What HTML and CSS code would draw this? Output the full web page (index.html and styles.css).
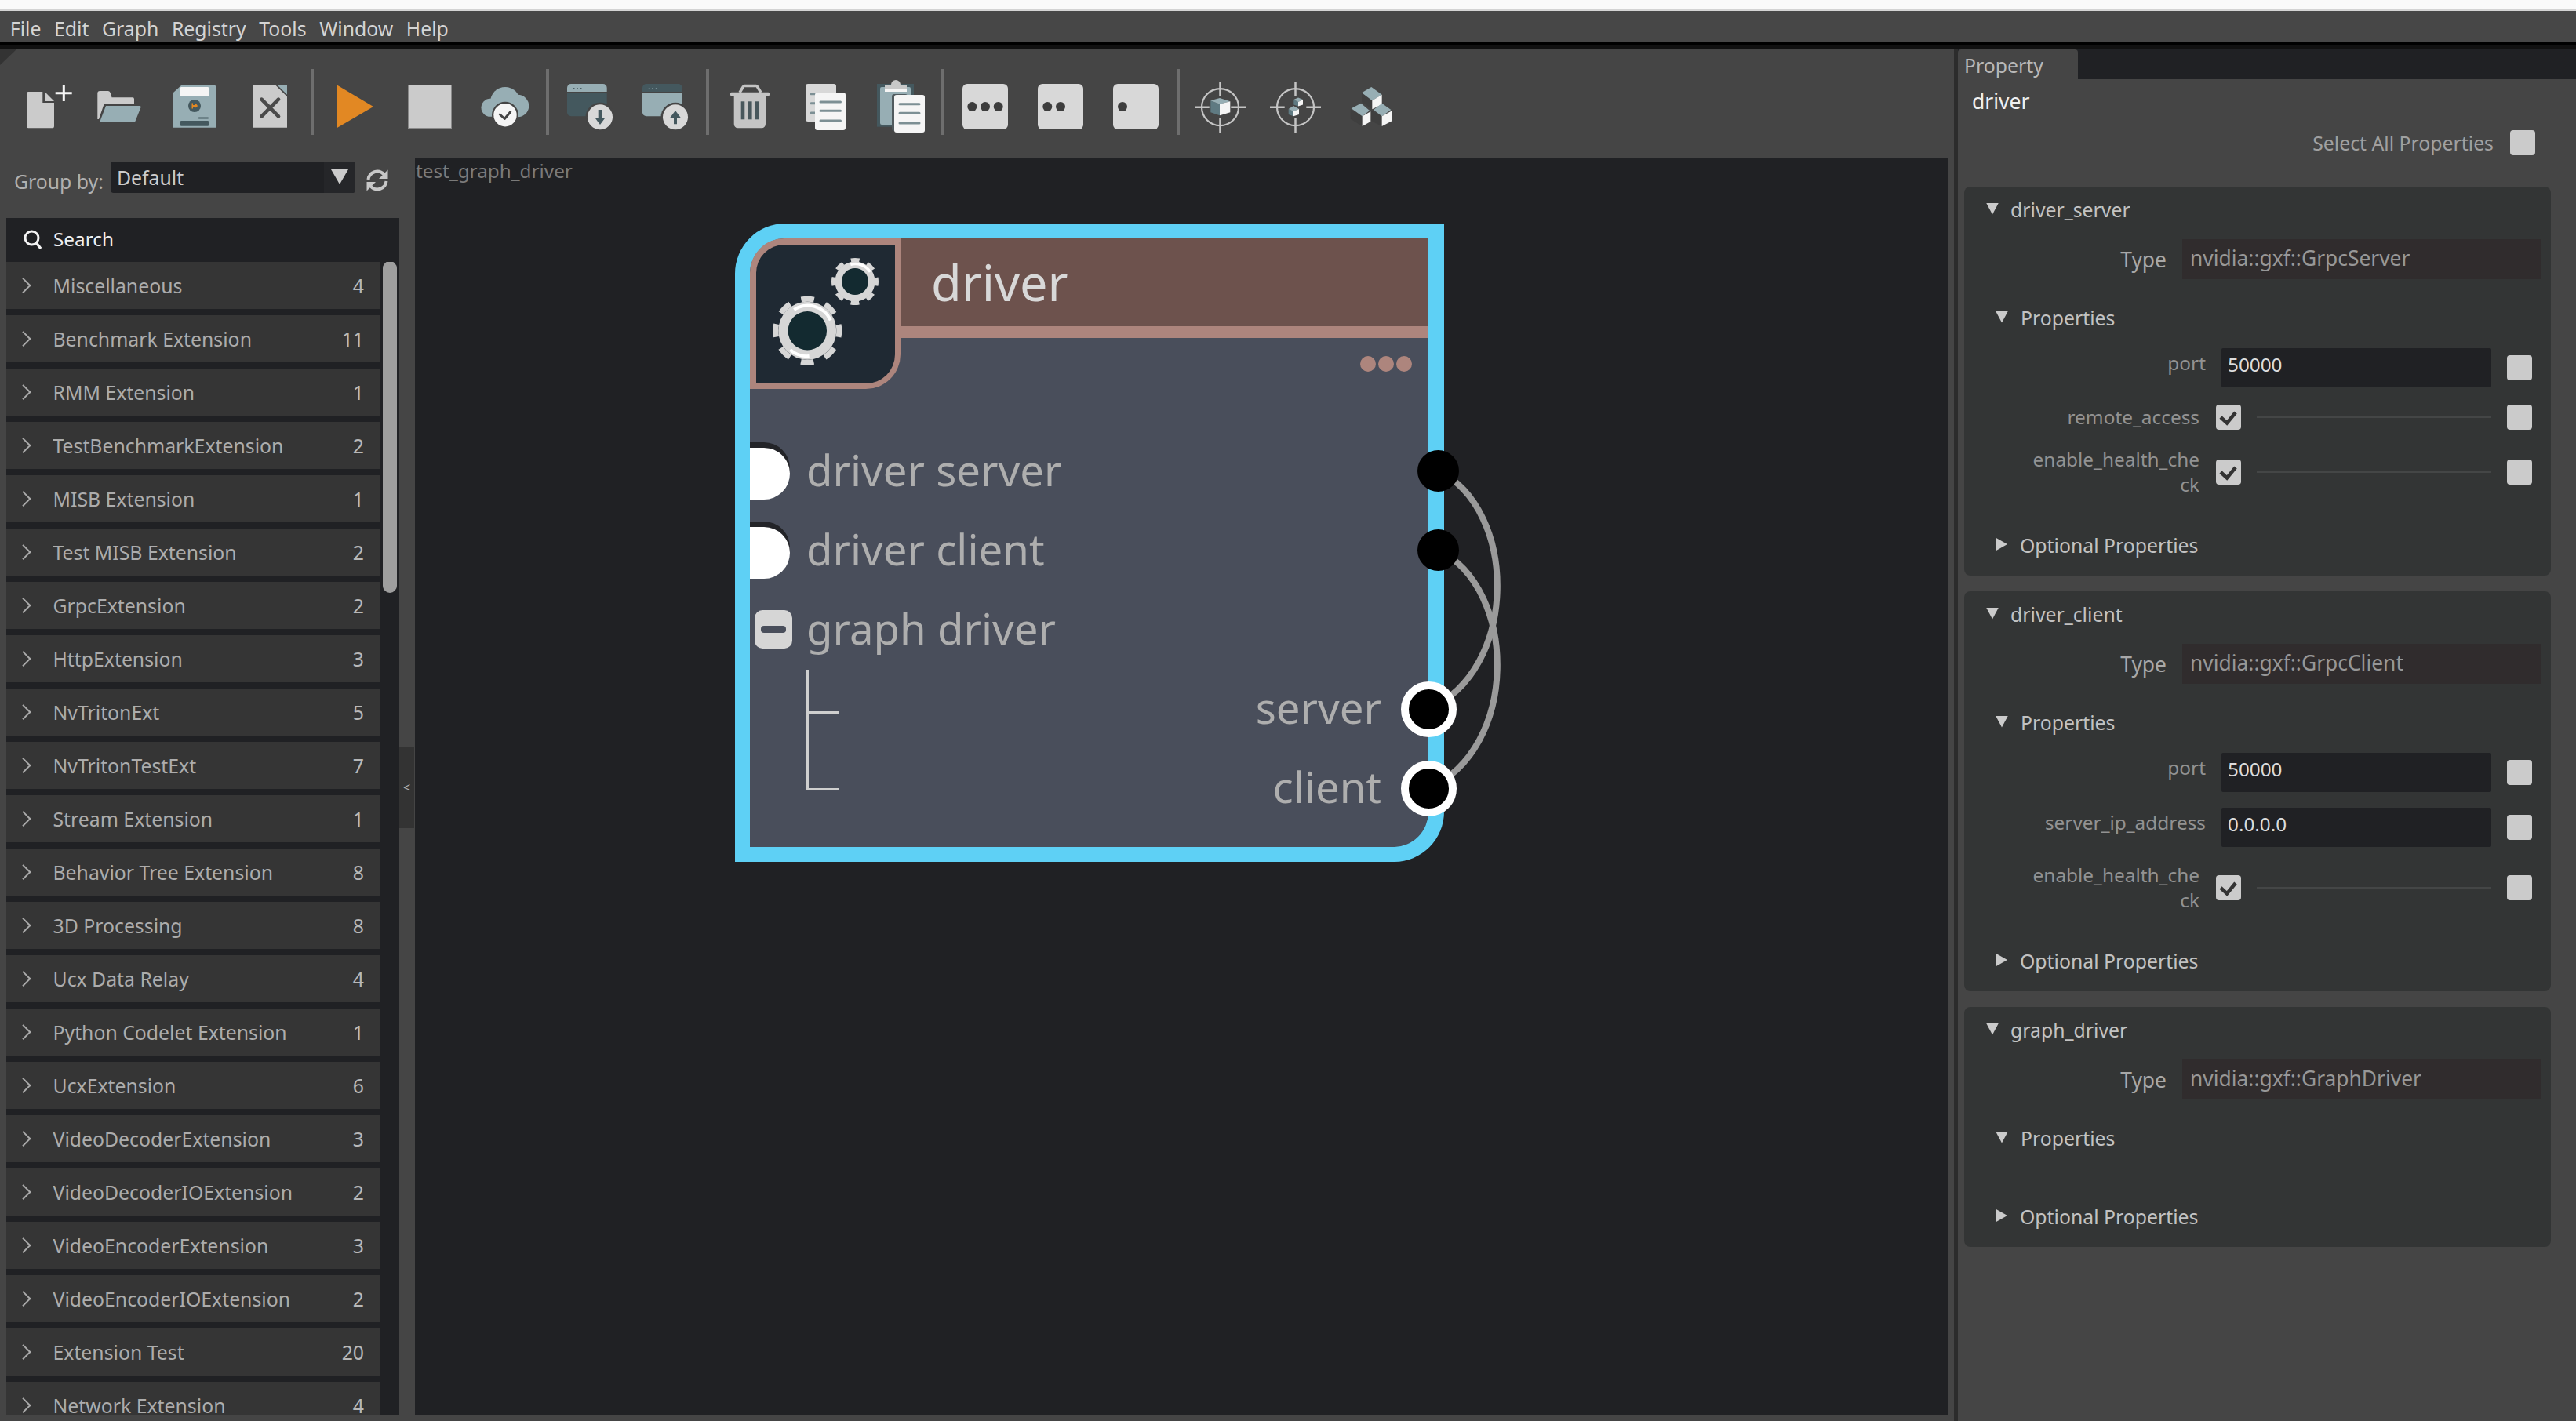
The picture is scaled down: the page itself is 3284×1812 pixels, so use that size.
FILE: index.html
```html
<!DOCTYPE html>
<html lang="en">
<head>
<meta charset="utf-8">
<title>Composer</title>
<link rel="stylesheet" href="styles.css">
</head>
<body>
<div class="titlebar"></div>
<nav class="menubar">
  <span class="menu-item">File</span><span class="menu-item">Edit</span><span class="menu-item">Graph</span><span class="menu-item">Registry</span><span class="menu-item">Tools</span><span class="menu-item">Window</span><span class="menu-item">Help</span>
</nav>
<div class="rule-black"></div>
<div class="rule-dark"></div>
<div class="main">
  <div class="workspace">
    <div class="corner"></div>
    <div class="toolbar">
      <svg class="tool" viewBox="8 88 96 84"><path class="c-light" d="M34 119a2 2 0 0 1 2-2h18.3v14H69v30.3a2 2 0 0 1-2 2H36a2 2 0 0 1-2-2z"/><path class="c-light" d="M57.3 117.3 69 129H57.3z"/><path class="c-white" d="M70.7 117.2h9.1v-8.9h3v8.9h8.9v3h-8.9v8.8h-3v-8.8h-9.1z"/></svg>
      <svg class="tool" viewBox="104 88 96 84"><path class="c-light" d="M124.3 119q0-3 3-3H138q2 0 3 3l1.5 5.3H169q2 0 2 2V133h-38.500l-6.500 19h-1.700z"/><path class="c-blue" d="M135 135h42.500q2.500 0 2 2l-7 17.500q-.5 1.500-2 1.500h-42q-1.500 0-1-1.500z"/></svg>
      <svg class="tool" viewBox="200 88 96 84"><path class="c-blue" d="M231 109h43q1 0 1 1v52.700h-54V118z"/><rect class="c-white" x="230" y="111" width="36" height="11.700" rx="1"/><circle class="c-teal" cx="248" cy="135" r="8"/><path class="c-orange" d="M244.500 131.500h1.500v7h-1.500zM246 134h2a2 2 0 1 1 0 2h-2z"/><rect class="c-teal" x="252.700" y="149.500" width="13.300" height="2" rx="1"/><rect class="c-teal" x="230" y="154" width="36" height="6.700" rx="1"/></svg>
      <svg class="tool" viewBox="296 88 96 84"><path class="c-light" d="M322 109h29.700L366 123.300v39.400h-44z"/><path class="c-blue" d="M354 109h12v11.700z"/><path class="x-stroke" d="M333.500 126.700 355 148.300M355 126.700 333.500 148.300"/></svg>
      <span class="sep"></span>
      <svg class="tool" viewBox="404 88 96 84"><path class="c-orange" d="M429.300 108.300 476 136l-46.700 27.300z"/></svg>
      <svg class="tool" viewBox="500 88 96 84"><rect class="stop" x="520.500" y="108.500" width="55" height="55"/></svg>
      <svg class="tool" viewBox="596 88 96 84"><circle class="c-blue" cx="644" cy="130" r="19"/><circle class="c-blue" cx="625" cy="137.300" r="11.500"/><circle class="c-blue" cx="660" cy="135" r="14.300"/><circle class="c-bg" cx="644" cy="146.700" r="17"/><circle class="c-white" cx="644" cy="146.700" r="14.700"/><path class="check-thin" d="M637.300 146l6 5.500 7.400-8.800"/></svg>
      <span class="sep"></span>
      <svg class="tool" viewBox="704 88 96 84"><path class="c-blue" d="M723 117v-5a5 5 0 0 1 5-5h40.700a5 5 0 0 1 5 5v5z"/><path class="c-teal" d="M723 119h50.700v24.300a5 5 0 0 1-5 5H728a5 5 0 0 1-5-5z"/><circle class="c-teal" cx="731.700" cy="113" r="1"/><circle class="c-teal" cx="736" cy="113" r="1"/><circle class="c-teal" cx="740.700" cy="113" r="1"/><circle class="c-bg" cx="765" cy="149.300" r="18.500"/><circle class="c-pale" cx="765" cy="149.300" r="16"/><path class="c-teal" d="M762.700 140h4.600v10h4.400l-6.700 9-6.700-9h4.400z"/></svg>
      <svg class="tool" viewBox="800 88 96 84"><path class="c-teal" d="M819 117v-5a5 5 0 0 1 5-5h40.700a5 5 0 0 1 5 5v5z"/><path class="c-blue" d="M819 119h50.700v24.300a5 5 0 0 1-5 5H824a5 5 0 0 1-5-5z"/><circle class="c-dots" cx="827.700" cy="113" r="1"/><circle class="c-dots" cx="832" cy="113" r="1"/><circle class="c-dots" cx="836.700" cy="113" r="1"/><circle class="c-bg" cx="861" cy="149.300" r="18.500"/><circle class="c-pale" cx="861" cy="149.300" r="16"/><path class="c-teal" d="m861 141 6.700 9h-4.700v8.300h-4V150h-4.700z"/></svg>
      <span class="sep"></span>
      <svg class="tool" viewBox="908 88 96 84"><path class="trash-handle" d="M943 118l4.500-7.500a2 2 0 0 1 2-1h14a2 2 0 0 1 2 1L970 118"/><rect class="c-trash" x="931" y="117.700" width="50" height="4.500" rx="1.500"/><path class="c-trash" d="M935.700 122.700H976V158a5 5 0 0 1-5 5.300h-30.300a5 5 0 0 1-5-5.300z"/><rect class="c-barteal" x="944.700" y="129.300" width="4.600" height="23"/><rect class="c-barteal" x="954" y="129.300" width="4.600" height="23"/><rect class="c-barteal" x="962.700" y="129.300" width="4.600" height="23"/></svg>
      <svg class="tool" viewBox="1004 88 96 84"><rect class="c-pale" x="1027" y="107" width="39" height="48" rx="3"/><path class="doc-line" d="M1034 119.700h6M1034 131.700h6M1034 144h6"/><rect class="c-white" x="1039" y="118" width="39" height="48" rx="3"/><path class="doc-line" d="M1046 130h25.500M1046 141.300h25.500M1046 154h25.500"/></svg>
      <svg class="tool" viewBox="1100 88 96 84"><rect class="c-teal" x="1118" y="107" width="47" height="54.700"/><rect class="c-blue" x="1122" y="111" width="39" height="48" rx="2"/><circle class="c-clip" cx="1142" cy="108" r="6"/><rect class="c-clip" x="1128" y="108" width="28" height="6"/><rect class="c-white" x="1128" y="114" width="28" height="3"/><rect class="c-shadow" x="1137" y="120" width="20" height="47" rx="3"/><rect class="c-white" x="1140" y="121" width="39" height="48" rx="3"/><path class="doc-line" d="M1147 132.700h25M1147 144.300h25M1147 157h25"/></svg>
      <span class="sep"></span>
      <svg class="tool" viewBox="1208 88 96 84"><rect class="c-pale" x="1227" y="107" width="58" height="58" rx="6"/><circle class="c-dark" cx="1239.300" cy="136" r="6"/><circle class="c-dark" cx="1256" cy="136" r="6"/><circle class="c-dark" cx="1272.700" cy="136" r="6"/></svg>
      <svg class="tool" viewBox="1304 88 96 84"><rect class="c-pale" x="1323" y="107" width="58" height="58" rx="6"/><circle class="c-dark" cx="1335.300" cy="136" r="6"/><circle class="c-dark" cx="1352" cy="136" r="6"/></svg>
      <svg class="tool" viewBox="1400 88 96 84"><rect class="c-pale" x="1419" y="107" width="58" height="58" rx="6"/><circle class="c-dark" cx="1431" cy="136" r="6"/></svg>
      <span class="sep"></span>
      <svg class="tool" viewBox="1508 88 96 84"><circle class="ring" cx="1555.500" cy="136.700" r="23.500"/><path class="cross" d="M1523 136.700h18.700M1569.300 136.700H1588M1555.500 104v18.700M1555.500 150.700V169"/><path class="c-cubel" d="M1543.300 128.300 1555 132.700v14.600l-11.700-4z"/><path class="c-blue" d="M1543.300 128.300 1555 125l13.300 4.300-13.300 3.400z"/><path class="c-white" d="m1555 132.700 13.300-3.400v14l-13.300 4z"/></svg>
      <svg class="tool" viewBox="1604 88 96 84"><circle class="ring" cx="1651.500" cy="136.700" r="23.500"/><path class="cross" d="M1619 136.700h18.700M1665.300 136.700H1684M1651.500 104v18.700M1651.500 150.700V169"/><path class="c-cubel" d="M1649.300 127l5.700 3v5.500l-5.700-2z"/><path class="c-blue" d="M1649.300 127l5.700-2.500 6 2.500-6 3z"/><path class="c-white" d="m1655 130 6-3v6.500l-6 2z"/><path class="c-cubel" d="M1642.700 139l6.300 3v6.300l-6.300-2.300z"/><path class="c-blue" d="M1642.700 139l6.300-4 7 4-7 3z"/><path class="c-white" d="m1649 142 7-3v7l-7 2.300z"/></svg>
      <svg class="tool" viewBox="1700 88 96 84"><path class="c-cubed" d="M1736 118.300 1749.300 128.300v11L1736 130z"/><path class="c-blue" d="M1736 118.300 1748.300 111l13.400 9.700-12.400 7.600z"/><path class="c-white" d="m1749.300 128.300 12.400-7.600v12.600l-12.400 6z"/><path class="c-cubed" d="M1721.700 139.300 1736.700 148.300V161l-15-9.300z"/><path class="c-blue" d="M1722.700 138.300 1735 131.700l11 9.300-9.300 7.300z"/><path class="c-white" d="m1736.700 148.300 10.600-6V155l-10.600 6z"/><path class="c-cubed" d="M1748 141 1761.700 148.300V161l-13.700-7z"/><path class="c-blue" d="M1751 140 1761.700 131.700 1773.300 140 1761.700 148.300z"/><path class="c-white" d="m1761.700 148.300 13.300-7.300v13l-13.300 7z"/></svg>
    </div>
    <div class="lower">
      <aside class="sidebar">
        <div class="group-row">
          <label class="group-label">Group by:</label>
          <div class="select"><span class="select-value">Default</span><span class="select-arrow"><span class="tri-big"></span></span></div>
          <svg class="refresh" viewBox="0 0 28 28"><path class="refresh-arc" d="M2.500 13a11.500 11.500 0 0 1 20-6.500"/><path class="refresh-arrow" d="M27.500 .5v11.500h-11.500z"/><path class="refresh-arc" d="M25.500 15a11.500 11.500 0 0 1-20 6.500"/><path class="refresh-arrow" d="M.5 27.500V16h11.500z"/></svg>
        </div>
        <div class="search">
          <svg class="search-icon" viewBox="0 0 24 26"><circle class="search-ring" cx="10.500" cy="10.500" r="8.500"/><path class="search-handle" d="M16.500 17 22 24"/></svg>
          <span>Search</span>
        </div>
        <div class="list">
          <div class="rows">
            <div class="row"><span class="row-name">Miscellaneous</span><span class="row-count">4</span></div>
            <div class="row"><span class="row-name">Benchmark Extension</span><span class="row-count">11</span></div>
            <div class="row"><span class="row-name">RMM Extension</span><span class="row-count">1</span></div>
            <div class="row"><span class="row-name">TestBenchmarkExtension</span><span class="row-count">2</span></div>
            <div class="row"><span class="row-name">MISB Extension</span><span class="row-count">1</span></div>
            <div class="row"><span class="row-name">Test MISB Extension</span><span class="row-count">2</span></div>
            <div class="row"><span class="row-name">GrpcExtension</span><span class="row-count">2</span></div>
            <div class="row"><span class="row-name">HttpExtension</span><span class="row-count">3</span></div>
            <div class="row"><span class="row-name">NvTritonExt</span><span class="row-count">5</span></div>
            <div class="row"><span class="row-name">NvTritonTestExt</span><span class="row-count">7</span></div>
            <div class="row"><span class="row-name">Stream Extension</span><span class="row-count">1</span></div>
            <div class="row"><span class="row-name">Behavior Tree Extension</span><span class="row-count">8</span></div>
            <div class="row"><span class="row-name">3D Processing</span><span class="row-count">8</span></div>
            <div class="row"><span class="row-name">Ucx Data Relay</span><span class="row-count">4</span></div>
            <div class="row"><span class="row-name">Python Codelet Extension</span><span class="row-count">1</span></div>
            <div class="row"><span class="row-name">UcxExtension</span><span class="row-count">6</span></div>
            <div class="row"><span class="row-name">VideoDecoderExtension</span><span class="row-count">3</span></div>
            <div class="row"><span class="row-name">VideoDecoderIOExtension</span><span class="row-count">2</span></div>
            <div class="row"><span class="row-name">VideoEncoderExtension</span><span class="row-count">3</span></div>
            <div class="row"><span class="row-name">VideoEncoderIOExtension</span><span class="row-count">2</span></div>
            <div class="row"><span class="row-name">Extension Test</span><span class="row-count">20</span></div>
            <div class="row"><span class="row-name">Network Extension</span><span class="row-count">4</span></div>
          </div>
          <div class="track"><div class="thumb"></div></div>
        </div>
      </aside>
      <div class="splitter"><div class="grip">&lt;</div></div>
      <section class="canvas">
        <div class="canvas-title">test_graph_driver</div>
        <div class="node">
          <svg class="wires" viewBox="0 0 1000 830"><path class="wire" d="M896 315C999 365 999 570 884 619"/><path class="wire" d="M896 416C999 466 999 671 884 720"/></svg>
          <div class="node-head">
            <div class="node-icon">
              <svg class="gears" viewBox="964 312 176 176">
                <circle class="gear-body" cx="1029.300" cy="421.700" r="37"/>
                <circle class="gear-teeth-big" cx="1029.300" cy="421.700" r="40.500"/>
                <path class="gear-shine" d="M1012.300 395a31.700 31.700 0 0 1 46.500 13.400M1007.300 446a32 32 0 0 0 24.300 8"/>
                <circle class="gear-hole" cx="1029.300" cy="421.700" r="24.700"/>
                <circle class="gear-body" cx="1090" cy="359" r="25.500"/>
                <circle class="gear-teeth-small" cx="1090" cy="359" r="27.500"/>
                <path class="gear-shine-small" d="M1084.300 337.300a22.600 22.600 0 0 1 25 9.400"/>
                <circle class="gear-hole" cx="1090" cy="359" r="17"/>
              </svg>
            </div>
            <div class="node-title">driver</div>
          </div>
          <div class="node-dots"><span class="dot"></span><span class="dot"></span><span class="dot"></span></div>
          <div class="node-row"><span class="port-in"></span><span class="port-label">driver server</span><span class="port-out"></span></div>
          <div class="node-row"><span class="port-in"></span><span class="port-label">driver client</span><span class="port-out"></span></div>
          <div class="node-row"><span class="collapse"><span class="collapse-bar"></span></span><span class="port-label">graph driver</span></div>
          <div class="node-row"><span class="branch branch-first"></span><span class="port-label port-right">server</span><span class="port-ring"></span></div>
          <div class="node-row"><span class="branch branch-last"></span><span class="port-label port-right">client</span><span class="port-ring"></span></div>
        </div>
      </section>
    </div>
  </div>
  <div class="divider"></div>
  <aside class="panel">
    <div class="tabs"><div class="tab">Property</div></div>
    <div class="panel-name">driver</div>
    <div class="select-all"><span>Select All Properties</span><span class="check"></span></div>

    <div class="card">
      <div class="head"><span class="tri-down"></span><span class="head-text">driver_server</span></div>
      <div class="type-row"><span class="type-label">Type</span><span class="type-value">nvidia::gxf::GrpcServer</span></div>
      <div class="sub-head"><span class="tri-down"></span><span class="head-text">Properties</span></div>
      <div class="props">
        <div class="field-row"><span class="field-label">port</span><span class="input">50000</span><span class="check"></span></div>
        <div class="check-row"><span class="check-label">remote_access</span><span class="check"><svg class="tick" viewBox="0 0 32 32"><path d="M6 16l8 7.500L25 10"/></svg></span><span class="slider"></span><span class="check"></span></div>
        <div class="check-row check-row-tall"><span class="check-label">enable_health_che<br>ck</span><span class="check"><svg class="tick" viewBox="0 0 32 32"><path d="M6 16l8 7.500L25 10"/></svg></span><span class="slider"></span><span class="check"></span></div>
      </div>
      <div class="sub-head sub-optional"><span class="tri-right"></span><span class="head-text">Optional Properties</span></div>
    </div>

    <div class="card">
      <div class="head"><span class="tri-down"></span><span class="head-text">driver_client</span></div>
      <div class="type-row"><span class="type-label">Type</span><span class="type-value">nvidia::gxf::GrpcClient</span></div>
      <div class="sub-head"><span class="tri-down"></span><span class="head-text">Properties</span></div>
      <div class="props">
        <div class="field-row"><span class="field-label">port</span><span class="input">50000</span><span class="check"></span></div>
        <div class="field-row"><span class="field-label">server_ip_address</span><span class="input">0.0.0.0</span><span class="check"></span></div>
        <div class="check-row check-row-tall"><span class="check-label">enable_health_che<br>ck</span><span class="check"><svg class="tick" viewBox="0 0 32 32"><path d="M6 16l8 7.500L25 10"/></svg></span><span class="slider"></span><span class="check"></span></div>
      </div>
      <div class="sub-head sub-optional"><span class="tri-right"></span><span class="head-text">Optional Properties</span></div>
    </div>

    <div class="card">
      <div class="head"><span class="tri-down"></span><span class="head-text">graph_driver</span></div>
      <div class="type-row"><span class="type-label">Type</span><span class="type-value">nvidia::gxf::GraphDriver</span></div>
      <div class="sub-head"><span class="tri-down"></span><span class="head-text">Properties</span></div>
      <div class="props"></div>
      <div class="sub-head sub-optional"><span class="tri-right"></span><span class="head-text">Optional Properties</span></div>
    </div>
  </aside>
</div>
</body>
</html>
```
FILE: styles.css
```css
* { box-sizing: border-box; }
html, body { margin: 0; padding: 0; }
body {
  width: 3284px;
  height: 1812px;
  overflow: hidden;
  background: #454545;
  font-family: "Noto Sans", "Open Sans", sans-serif;
  font-size: 24.800px;
  line-height: 32px;
  color: #b0b0b0;
  display: flex;
  flex-direction: column;
}

/* window chrome */
.titlebar { height: 14px; background: #fafafa; border-bottom: 2px solid #d4d4d4; flex: none; }
.menubar { height: 40px; flex: none; background: #474747; display: flex; padding: 5px 0 0 4.500px; color: #d4d4d4; }
.menu-item { padding: 0 8.300px; line-height: 35px; }
.rule-black { height: 4px; background: #000; flex: none; }
.rule-dark { height: 4px; background: #111; flex: none; }

.main { flex: 1; display: flex; min-height: 0; }
.workspace { width: 2491px; flex: none; display: flex; flex-direction: column; position: relative; }
.corner { position: absolute; left: 0; top: 0; width: 22px; height: 21px; background: #333; clip-path: polygon(0 0, 100% 0, 0 100%); }
.divider { width: 5px; flex: none; background: #2c2c2c; }

/* toolbar */
.toolbar { height: 140px; flex: none; display: flex; align-items: flex-start; padding: 26px 0 0 8px; }
.tool { width: 96px; height: 84px; flex: none; display: block; }
.sep { width: 4px; height: 84px; margin: 0 4px; background: #6e6e6e; flex: none; }
.c-light { fill: #cbcbcb; }
.c-white { fill: #f5f5f5; }
.c-blue { fill: #97aeb4; }
.c-teal { fill: #44585e; }
.c-dots { fill: #7b9299; }
.c-orange { fill: #e28823; }
.c-bg { fill: #454545; }
.c-pale { fill: #d8d8d8; }
.c-dark { fill: #3d3d3d; }
.c-trash { fill: #c4c4c4; }
.c-barteal { fill: #48575c; }
.c-clip { fill: #c8c8c8; }
.c-shadow { fill: #505a5e; }
.c-cubel { fill: #5f7a82; }
.c-cubed { fill: #3f3f3f; }
.stop { fill: #cbcbcb; stroke: #8a8a8a; stroke-width: 1; }
.x-stroke { fill: none; stroke: #4a4a4a; stroke-width: 4.700; stroke-linecap: round; }
.check-thin { fill: none; stroke: #454545; stroke-width: 3; stroke-linecap: round; stroke-linejoin: round; }
.trash-handle { fill: none; stroke: #c4c4c4; stroke-width: 3.500; }
.doc-line { fill: none; stroke: #7c8f94; stroke-width: 3; stroke-linecap: round; }
.ring { fill: none; stroke: #c4c4c4; stroke-width: 2.200; }
.cross { fill: none; stroke: #c4c4c4; stroke-width: 2.500; }

/* lower area */
.lower { flex: 1; display: flex; min-height: 0; padding-right: 7px; }
.sidebar { width: 509px; flex: none; display: flex; flex-direction: column; padding-bottom: 8px; }
.group-row { height: 76px; flex: none; padding-top: 4px; display: flex; align-items: flex-start; }
.group-label { margin: 5px 0 0 18px; width: 123px; line-height: 40px; color: #b0b0b0; white-space: nowrap; }
.select { width: 312px; height: 40px; background: #202124; border-radius: 4px; display: flex; overflow: hidden; }
.select-value { flex: 1; padding-left: 8px; line-height: 40px; color: #cccccc; }
.select-arrow { width: 40px; background: #252629; padding: 10px 0 0 9px; }
.tri-big { display: block; width: 22px; height: 19px; background: #cbcbcb; clip-path: polygon(0 0, 100% 0, 50% 100%); }
.refresh { width: 28px; height: 28px; margin: 10px 0 0 14px; }
.refresh-arc { fill: none; stroke: #c8c8c8; stroke-width: 4; }
.refresh-arrow { fill: #c8c8c8; }

.search { height: 56px; flex: none; margin-left: 8px; width: 501px; background: #202124; color: #f0f0f0; display: flex; align-items: center; padding: 0 0 3px 22px; font-size: 24.300px; }
.search-icon { width: 24px; height: 26px; margin: 3px 14px 0 0; }
.search-ring { fill: none; stroke: #f4f4f4; stroke-width: 3; }
.search-handle { fill: none; stroke: #f4f4f4; stroke-width: 3.500; }

.list { flex: 1; min-height: 0; margin-left: 8px; width: 501px; background: #202124; overflow: hidden; display: flex; align-items: flex-start; }
.rows { width: 477px; flex: none; display: flex; flex-direction: column; gap: 8px; }
.row { height: 60px; flex: none; background: #353535; display: flex; align-items: center; padding-right: 21px; color: #acacac; }
.row::before { content: ""; width: 11.500px; height: 11.500px; margin-left: 14.500px; border-top: 2.500px solid #aaa; border-right: 2.500px solid #aaa; transform: rotate(45deg); flex: none; }
.row-name { margin-left: 31.500px; }
.row-count { margin-left: auto; color: #b8b8b8; }
.track { flex: 1; padding: 0 3px; }
.thumb { width: 18px; height: 423px; margin-top: -1px; background: #9e9e9e; border-radius: 9px; }

.splitter { width: 20px; flex: none; display: flex; align-items: center; padding-bottom: 166px; }
.grip { width: 19px; height: 104px; margin-top: 160px; background: #333; color: #b0b0b0; font-size: 16px; line-height: 104px; text-align: center; }

/* canvas */
.canvas { flex: 1; position: relative; background: #202124; margin-bottom: 8px; }
.canvas-title { padding-left: 1px; line-height: 32px; color: #7a7a7a; font-size: 24.300px; }
.node {
  position: absolute; left: 408px; top: 83px;
  width: 904px; height: 814px;
  border: solid #5ed0f5; border-width: 19px 20px 19px 19px;
  border-radius: 64px 0 64px 0;
  background: #494e5b;
  color: #aeaeae;
}
.wires { position: absolute; left: -19px; top: -19px; width: 1000px; height: 830px; }
.wire { fill: none; stroke: #9a9a9a; stroke-width: 8; }
.node-head { display: flex; height: 127px; align-items: flex-start; }
.node-icon { width: 192px; height: 192px; flex: none; border: solid #ad857d; border-width: 8px 7px 7px 8px; border-radius: 44px 0 44px 0; background: #1f2933; position: relative; }
.gears { display: block; width: 176px; height: 176px; }
.gear-body { fill: #d6d6d6; }
.gear-teeth-big { fill: none; stroke: #d6d6d6; stroke-width: 7; stroke-dasharray: 16.500 15.310; stroke-dashoffset: 8.250; }
.gear-teeth-small { fill: none; stroke: #d6d6d6; stroke-width: 5; stroke-dasharray: 10.800 10.800; stroke-dashoffset: 5.400; }
.gear-hole { fill: #132a30; }
.gear-shine { fill: none; stroke: #fff; stroke-width: 4; }
.gear-shine-small { fill: none; stroke: #fff; stroke-width: 3.500; }
.node-title { flex: 1; height: 127px; background: #6d524d; border-bottom: 15px solid #ad857d; padding-left: 39px; font-size: 63px; line-height: 112px; color: #d8d8d8; }
.node-dots { display: flex; justify-content: flex-end; gap: 3px; height: 20px; margin: 23px 21px 73.500px 0; }
.dot { width: 20px; height: 20px; border-radius: 50%; background: #ad857d; }
.node-row { height: 101px; position: relative; display: flex; align-items: flex-start; font-size: 54.500px; line-height: 101px; }
.port-label { margin-left: 72px; margin-top: 1.500px; white-space: nowrap; }
.port-right { margin-left: auto; margin-right: 60px; }
.port-in { position: absolute; left: 0; top: 23px; width: 51px; height: 66px; background: #fff; border-radius: 0 33px 33px 0; box-shadow: 0 -7px 0 #232428; }
.port-out { position: absolute; left: 850.500px; top: 26px; width: 53px; height: 53px; background: #000; border-radius: 50%; }
.port-ring { position: absolute; left: 829.500px; top: 18px; width: 71px; height: 71px; background: #000; border: 10px solid #fff; border-radius: 50%; }
.collapse { position: absolute; left: 6px; top: 28.500px; width: 48px; height: 49px; background: #d6d6d6; border-radius: 10px; display: flex; align-items: center; justify-content: center; }
.collapse-bar { width: 32px; height: 9px; border-radius: 4px; background: #494e5b; }
.branch { flex: none; width: 42px; margin-left: 72px; border-left: 3px solid #cfcfcf; border-bottom: 3px solid #cfcfcf; }
.branch-first { height: 56px; margin-top: 3.500px; }
.branch-last { height: 101px; margin-top: -45px; }

/* property panel */
.panel { flex: 1; min-width: 0; padding-left: 0; display: flex; flex-direction: column; }
.tabs { height: 39px; flex: none; background: #202124; display: flex; align-items: flex-end; }
.tab { width: 153px; height: 38px; background: #454545; border-radius: 4px 4px 0 0; padding: 3px 0 0 8px; line-height: 35px; color: #b8b8b8; }
.panel-name { margin: 8px 0 0 18px; font-size: 26.500px; line-height: 40px; color: #f0f0f0; }
.select-all { margin-top: 17px; display: flex; justify-content: flex-end; align-items: center; padding-right: 52px; gap: 21px; color: #a0a0a0; height: 32px; flex: none; }
.check { width: 32px; height: 32px; flex: none; background: #cbcbcb; border-radius: 4px; display: block; }
.tick { display: block; width: 32px; height: 32px; fill: none; stroke: #333; stroke-width: 4.500; }

.card { margin: 0 32px 20px 8px; background: #333535; border-radius: 8px; padding: 10px 0 20px; flex: none; }
.select-all + .card { margin-top: 40px; }
.head, .sub-head { height: 38px; display: flex; align-items: center; line-height: 38px; color: #c2c2c2; white-space: nowrap; }
.head { padding-left: 28px; }
.head .head-text { margin-left: 15px; }
.sub-head { padding-left: 40px; margin-top: 30px; }
.sub-head .head-text { margin-left: 16px; }
.sub-optional { margin-top: 42px; }
.tri-down { width: 16px; height: 15px; flex: none; margin-top: -2px; background: #cbcbcb; clip-path: polygon(0 0, 100% 0, 50% 100%); }
.tri-right { width: 15px; height: 17px; flex: none; margin-top: -2px; background: #cbcbcb; clip-path: polygon(0 0, 100% 50%, 0 100%); }
.type-row { display: flex; margin-top: 19px; }
.type-label { width: 258px; text-align: right; padding-top: 10px; color: #a8a8a8; font-size: 26.400px; }
.type-value { width: 458px; height: 51px; margin-left: 20px; padding: 0 0 4px 10px; background: #302c2d; color: #979797; display: flex; align-items: center; white-space: nowrap; font-size: 26.400px; }
.props { padding-top: 20px; display: flex; flex-direction: column; gap: 20px; }
.field-row { display: flex; align-items: center; height: 50px; }
.field-label { width: 308px; text-align: right; padding-bottom: 13px; color: #929292; font-size: 24.400px; }
.input { width: 344px; height: 50px; margin: 0 20px; padding: 0 0 8px 8px; background: #202124; color: #dcdcdc; border-radius: 2px; display: flex; align-items: center; font-size: 24.300px; }
.check-row { display: flex; align-items: center; height: 36px; }
.check-row-tall { height: 64px; }
.check-label { width: 300px; text-align: right; margin-right: 21px; color: #929292; font-size: 24.400px; }
.slider { width: 299px; height: 2px; margin: 0 20px; background: #444646; }
```
